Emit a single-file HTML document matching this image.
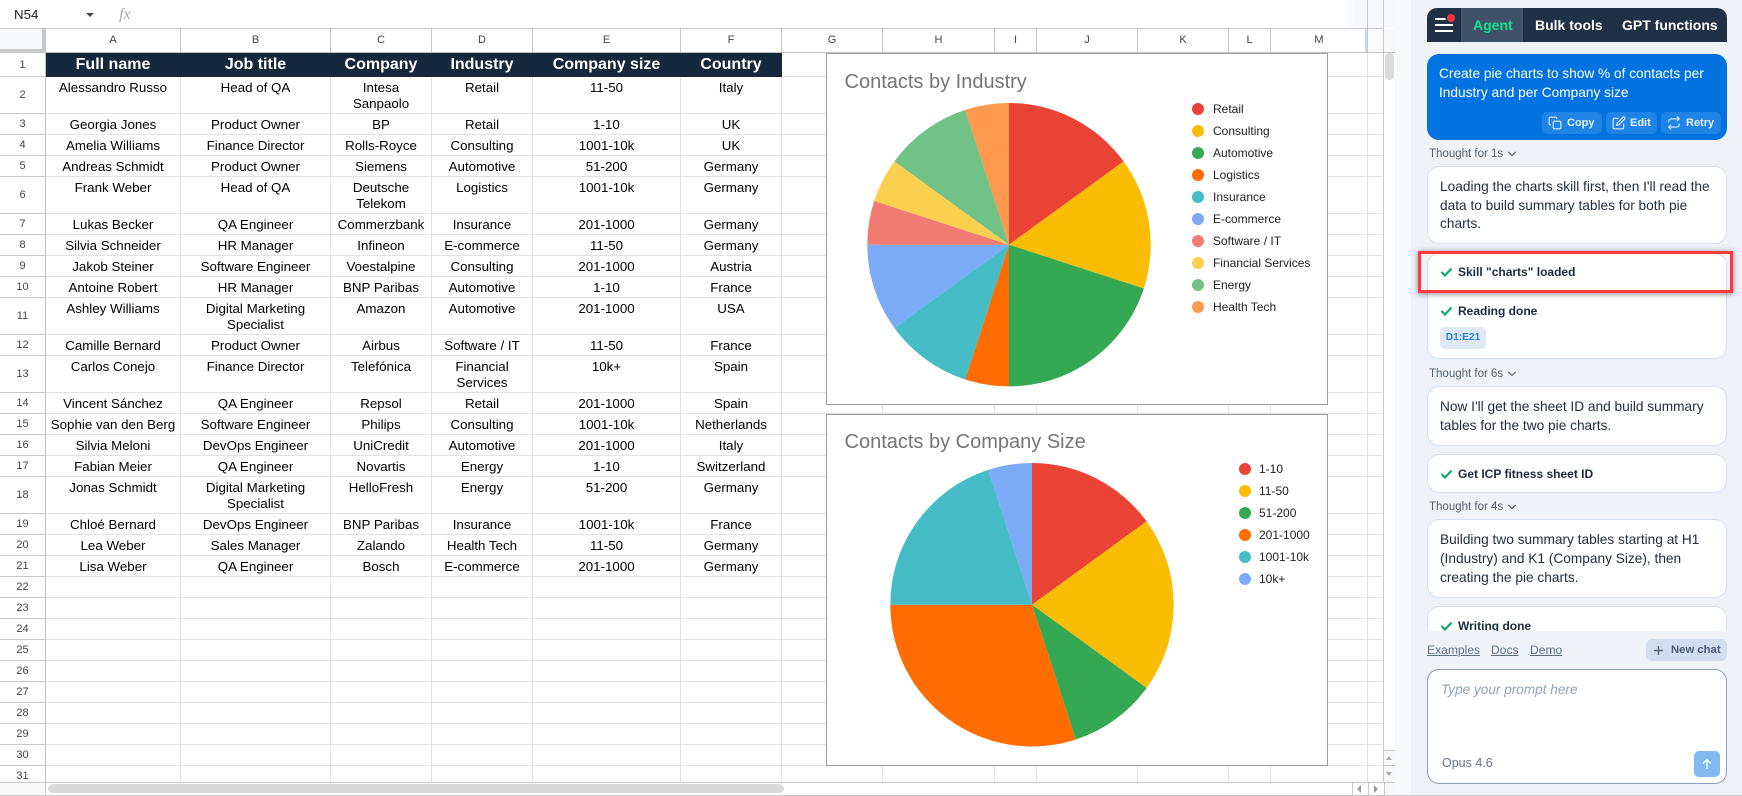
<!DOCTYPE html>
<html><head><meta charset="utf-8"><title>Sheet</title>
<style>
html,body{margin:0;padding:0;width:1742px;height:796px;overflow:hidden;background:#fff;font-family:"Liberation Sans",sans-serif}
*{box-sizing:border-box}
.a{position:absolute}
#grid{position:absolute;left:0;top:53px;width:1384px;height:729px;overflow:hidden}
table{border-collapse:separate;border-spacing:0;table-layout:fixed;width:1384px;font-size:13.33px;color:#000}
td,th{height:21px;padding:3px 2px 0;line-height:16px;text-align:center;vertical-align:top;border-right:1px solid #e2e2e2;border-bottom:1px solid #e2e2e2;overflow:hidden;white-space:nowrap}
th{font-weight:400;font-size:11px;color:#444;border-right:1px solid #c0c0c0;border-bottom:1px solid #c8c8c8;vertical-align:middle;padding:0}
td:last-child{border-right:1px solid #c8c8c8}
tr.t td,tr.t th{height:37px}
tr.h td{height:24px;background:#15283c;color:#fff;font-weight:700;font-size:16px;line-height:22px;padding:0;border-color:#15283c;vertical-align:middle}
tr.h td:last-child{background:#fff;border-right:1px solid #c8c8c8;border-bottom:1px solid #e2e2e2}
.ch{position:absolute;left:0;top:29px;height:24px;display:flex;border-bottom:1px solid #c0c0c0;width:1384px;background:#fff}
.ch span{display:block;height:23px;line-height:23px;text-align:center;font-size:11px;color:#444;border-right:1px solid #c8c8c8}
.v{position:absolute;top:53px;width:1px;height:729px;background:#e2e2e2}
.chart{position:absolute;left:826px;width:502px;height:352px;background:#fff;border:1px solid #9e9e9e}
.tt{position:absolute;left:844.5px;font-size:20px;line-height:24px;color:#757575;white-space:nowrap}
.lg{position:absolute;font-size:12px;line-height:16px;color:#222;white-space:nowrap}
.p{position:absolute;white-space:nowrap;font-size:13.7px;line-height:19px;color:#1f2d3d}
.th{position:absolute;left:1429px;font-size:11.5px;line-height:16px;color:#55606f;white-space:nowrap}
.card{position:absolute;left:1427px;width:300px;background:#fff;border:1px solid #d3e0f2;border-radius:12px}
.b{position:absolute;left:1458px;font-size:12px;line-height:16px;font-weight:700;color:#1b2a3c;white-space:nowrap}
.btn{position:absolute;top:112px;height:22px;background:#1f84e5;border-radius:5px}
.bt{position:absolute;top:115px;font-size:11px;line-height:16px;font-weight:700;color:#e4f0fc;white-space:nowrap}
.lk{position:absolute;top:642px;font-size:12.1px;line-height:16px;color:#5d6f85;text-decoration:underline;white-space:nowrap}
svg{position:absolute;overflow:visible}
</style></head><body>

<!-- formula bar -->
<div class="a" style="left:14px;top:7px;font-size:13.33px;line-height:16px;color:#222">N54</div>
<div class="a" style="left:86px;top:13px;width:0;height:0;border-left:4px solid transparent;border-right:4px solid transparent;border-top:4px solid #444"></div>
<div class="a" style="left:119px;top:6px;font-family:'Liberation Serif',serif;font-style:italic;font-size:16px;line-height:18px;color:#a8a8a8">fx</div>
<div class="a" style="left:1340px;top:0;width:55px;height:28px;background:linear-gradient(90deg,#fff,#f6f8fc 30%)"></div>
<div class="a" style="left:0;top:28px;width:1384px;height:1px;background:#c7c7c7"></div>
<div class="a" style="left:1367px;top:0;width:1px;height:29px;background:#c8c8c8"></div>
<div class="a" style="left:1383px;top:0;width:1px;height:29px;background:#c8c8c8"></div>

<!-- column headers -->
<div class="ch">
<span style="width:46px;background:#f8f9fa;border-right:4px solid #c8c8c8;height:24px;border-bottom:4px solid #c8c8c8"></span>
<span style="width:135px">A</span><span style="width:150px">B</span><span style="width:101px">C</span><span style="width:101px">D</span><span style="width:148px">E</span><span style="width:101px">F</span><span style="width:101px">G</span><span style="width:112px">H</span><span style="width:42px">I</span><span style="width:101px">J</span><span style="width:91px">K</span><span style="width:42px">L</span><span style="width:97px">M</span><span style="width:16px;background:#fbfbfb"></span>
</div>
<div class="a" style="left:1365px;top:29px;width:2px;height:23px;background:#c9d8f2"></div>

<!-- grid -->
<div id="grid">
<table>
<colgroup><col style="width:46px"><col style="width:135px"><col style="width:150px"><col style="width:101px"><col style="width:101px"><col style="width:148px"><col style="width:101px"><col style="width:602px"></colgroup>
<tr class="h"><th style="height:24px">1</th><td>Full name</td><td>Job title</td><td>Company</td><td>Industry</td><td>Company size</td><td>Country</td><td></td></tr>
<tr class="t"><th>2</th><td>Alessandro Russo</td><td>Head of QA</td><td>Intesa<br>Sanpaolo</td><td>Retail</td><td>11-50</td><td>Italy</td><td></td></tr>
<tr><th>3</th><td>Georgia Jones</td><td>Product Owner</td><td>BP</td><td>Retail</td><td>1-10</td><td>UK</td><td></td></tr>
<tr><th>4</th><td>Amelia Williams</td><td>Finance Director</td><td>Rolls-Royce</td><td>Consulting</td><td>1001-10k</td><td>UK</td><td></td></tr>
<tr><th>5</th><td>Andreas Schmidt</td><td>Product Owner</td><td>Siemens</td><td>Automotive</td><td>51-200</td><td>Germany</td><td></td></tr>
<tr class="t"><th>6</th><td>Frank Weber</td><td>Head of QA</td><td>Deutsche<br>Telekom</td><td>Logistics</td><td>1001-10k</td><td>Germany</td><td></td></tr>
<tr><th>7</th><td>Lukas Becker</td><td>QA Engineer</td><td>Commerzbank</td><td>Insurance</td><td>201-1000</td><td>Germany</td><td></td></tr>
<tr><th>8</th><td>Silvia Schneider</td><td>HR Manager</td><td>Infineon</td><td>E-commerce</td><td>11-50</td><td>Germany</td><td></td></tr>
<tr><th>9</th><td>Jakob Steiner</td><td>Software Engineer</td><td>Voestalpine</td><td>Consulting</td><td>201-1000</td><td>Austria</td><td></td></tr>
<tr><th>10</th><td>Antoine Robert</td><td>HR Manager</td><td>BNP Paribas</td><td>Automotive</td><td>1-10</td><td>France</td><td></td></tr>
<tr class="t"><th>11</th><td>Ashley Williams</td><td>Digital Marketing<br>Specialist</td><td>Amazon</td><td>Automotive</td><td>201-1000</td><td>USA</td><td></td></tr>
<tr><th>12</th><td>Camille Bernard</td><td>Product Owner</td><td>Airbus</td><td>Software / IT</td><td>11-50</td><td>France</td><td></td></tr>
<tr class="t"><th>13</th><td>Carlos Conejo</td><td>Finance Director</td><td>Telefónica</td><td>Financial<br>Services</td><td>10k+</td><td>Spain</td><td></td></tr>
<tr><th>14</th><td>Vincent Sánchez</td><td>QA Engineer</td><td>Repsol</td><td>Retail</td><td>201-1000</td><td>Spain</td><td></td></tr>
<tr><th>15</th><td>Sophie van den Berg</td><td>Software Engineer</td><td>Philips</td><td>Consulting</td><td>1001-10k</td><td>Netherlands</td><td></td></tr>
<tr><th>16</th><td>Silvia Meloni</td><td>DevOps Engineer</td><td>UniCredit</td><td>Automotive</td><td>201-1000</td><td>Italy</td><td></td></tr>
<tr><th>17</th><td>Fabian Meier</td><td>QA Engineer</td><td>Novartis</td><td>Energy</td><td>1-10</td><td>Switzerland</td><td></td></tr>
<tr class="t"><th>18</th><td>Jonas Schmidt</td><td>Digital Marketing<br>Specialist</td><td>HelloFresh</td><td>Energy</td><td>51-200</td><td>Germany</td><td></td></tr>
<tr><th>19</th><td>Chloé Bernard</td><td>DevOps Engineer</td><td>BNP Paribas</td><td>Insurance</td><td>1001-10k</td><td>France</td><td></td></tr>
<tr><th>20</th><td>Lea Weber</td><td>Sales Manager</td><td>Zalando</td><td>Health Tech</td><td>11-50</td><td>Germany</td><td></td></tr>
<tr><th>21</th><td>Lisa Weber</td><td>QA Engineer</td><td>Bosch</td><td>E-commerce</td><td>201-1000</td><td>Germany</td><td></td></tr>
<tr><th>22</th><td></td><td></td><td></td><td></td><td></td><td></td><td></td></tr>
<tr><th>23</th><td></td><td></td><td></td><td></td><td></td><td></td><td></td></tr>
<tr><th>24</th><td></td><td></td><td></td><td></td><td></td><td></td><td></td></tr>
<tr><th>25</th><td></td><td></td><td></td><td></td><td></td><td></td><td></td></tr>
<tr><th>26</th><td></td><td></td><td></td><td></td><td></td><td></td><td></td></tr>
<tr><th>27</th><td></td><td></td><td></td><td></td><td></td><td></td><td></td></tr>
<tr><th>28</th><td></td><td></td><td></td><td></td><td></td><td></td><td></td></tr>
<tr><th>29</th><td></td><td></td><td></td><td></td><td></td><td></td><td></td></tr>
<tr><th>30</th><td></td><td></td><td></td><td></td><td></td><td></td><td></td></tr>
<tr><th>31</th><td></td><td></td><td></td><td></td><td></td><td></td><td></td></tr>
</table>
</div>
<div class="v" style="left:882px"></div><div class="v" style="left:994px"></div><div class="v" style="left:1036px"></div><div class="v" style="left:1137px"></div><div class="v" style="left:1228px"></div><div class="v" style="left:1270px"></div><div class="v" style="left:1367px"></div>

<!-- charts -->
<div class="chart" style="top:53px"></div>
<div class="chart" style="top:414px"></div>
<div class="tt" style="top:70px">Contacts by Industry</div>
<div class="tt" style="top:430px">Contacts by Company Size</div>
<svg style="left:0;top:0" width="1742" height="796" fill="none">
<g transform="translate(1009 244.7)">
<path fill="#ea4335" d="M0 0L0 -141.7A141.7 141.7 0 0 1 114.6 -83.3Z"/>
<path fill="#fbbc04" d="M0 0L114.6 -83.3A141.7 141.7 0 0 1 134.8 43.8Z"/>
<path fill="#34a853" d="M0 0L134.8 43.8A141.7 141.7 0 0 1 0 141.7Z"/>
<path fill="#ff6d01" d="M0 0L0 141.7A141.7 141.7 0 0 1 -43.8 134.8Z"/>
<path fill="#46bdc6" d="M0 0L-43.8 134.8A141.7 141.7 0 0 1 -114.6 83.3Z"/>
<path fill="#7baaf7" d="M0 0L-114.6 83.3A141.7 141.7 0 0 1 -141.7 0Z"/>
<path fill="#f07b72" d="M0 0L-141.7 0A141.7 141.7 0 0 1 -134.8 -43.8Z"/>
<path fill="#fcd04f" d="M0 0L-134.8 -43.8A141.7 141.7 0 0 1 -114.6 -83.3Z"/>
<path fill="#71c287" d="M0 0L-114.6 -83.3A141.7 141.7 0 0 1 -43.8 -134.8Z"/>
<path fill="#ff994d" d="M0 0L-43.8 -134.8A141.7 141.7 0 0 1 0 -141.7Z"/>
</g>
<g transform="translate(1032 604.7)">
<path fill="#ea4335" d="M0 0L0 -141.7A141.7 141.7 0 0 1 114.6 -83.3Z"/>
<path fill="#fbbc04" d="M0 0L114.6 -83.3A141.7 141.7 0 0 1 114.6 83.3Z"/>
<path fill="#34a853" d="M0 0L114.6 83.3A141.7 141.7 0 0 1 43.8 134.8Z"/>
<path fill="#ff6d01" d="M0 0L43.8 134.8A141.7 141.7 0 0 1 -141.7 0Z"/>
<path fill="#46bdc6" d="M0 0L-141.7 0A141.7 141.7 0 0 1 -43.8 -134.8Z"/>
<path fill="#7baaf7" d="M0 0L-43.8 -134.8A141.7 141.7 0 0 1 0 -141.7Z"/>
</g>
<circle cx="1198" cy="109" r="6" fill="#ea4335"/><circle cx="1198" cy="131" r="6" fill="#fbbc04"/><circle cx="1198" cy="153" r="6" fill="#34a853"/><circle cx="1198" cy="175" r="6" fill="#ff6d01"/><circle cx="1198" cy="197" r="6" fill="#46bdc6"/><circle cx="1198" cy="219" r="6" fill="#7baaf7"/><circle cx="1198" cy="241" r="6" fill="#f07b72"/><circle cx="1198" cy="263" r="6" fill="#fcd04f"/><circle cx="1198" cy="285" r="6" fill="#71c287"/><circle cx="1198" cy="307" r="6" fill="#ff994d"/>
<circle cx="1245" cy="469" r="6" fill="#ea4335"/><circle cx="1245" cy="491" r="6" fill="#fbbc04"/><circle cx="1245" cy="513" r="6" fill="#34a853"/><circle cx="1245" cy="535" r="6" fill="#ff6d01"/><circle cx="1245" cy="557" r="6" fill="#46bdc6"/><circle cx="1245" cy="579" r="6" fill="#7baaf7"/>
</svg>
<div class="lg" style="left:1213px;top:101px">Retail</div>
<div class="lg" style="left:1213px;top:123px">Consulting</div>
<div class="lg" style="left:1213px;top:145px">Automotive</div>
<div class="lg" style="left:1213px;top:167px">Logistics</div>
<div class="lg" style="left:1213px;top:189px">Insurance</div>
<div class="lg" style="left:1213px;top:211px">E-commerce</div>
<div class="lg" style="left:1213px;top:233px">Software / IT</div>
<div class="lg" style="left:1213px;top:255px">Financial Services</div>
<div class="lg" style="left:1213px;top:277px">Energy</div>
<div class="lg" style="left:1213px;top:299px">Health Tech</div>
<div class="lg" style="left:1259px;top:461px">1-10</div>
<div class="lg" style="left:1259px;top:483px">11-50</div>
<div class="lg" style="left:1259px;top:505px">51-200</div>
<div class="lg" style="left:1259px;top:527px">201-1000</div>
<div class="lg" style="left:1259px;top:549px">1001-10k</div>
<div class="lg" style="left:1259px;top:571px">10k+</div>

<!-- scrollbars -->
<div class="a" style="left:1384px;top:29px;width:11px;height:24px;background:#f8f8f8;border-bottom:1px solid #c0c0c0"></div>
<div class="a" style="left:1384px;top:53px;width:11px;height:729px;background:#fff"></div>
<div class="a" style="left:1385px;top:53px;width:9px;height:27px;background:#dadada;border-radius:5px"></div>
<div class="a" style="left:1384px;top:750px;width:11px;height:16px;background:#f8f8f8;border-top:1px solid #c8c8c8;border-bottom:1px solid #c8c8c8"></div>
<div class="a" style="left:1384px;top:766px;width:11px;height:16px;background:#f8f8f8"></div>
<div class="a" style="left:1386px;top:756px;width:0;height:0;border-left:3.5px solid transparent;border-right:3.5px solid transparent;border-bottom:4px solid #aaa"></div>
<div class="a" style="left:1386px;top:772px;width:0;height:0;border-left:3.5px solid transparent;border-right:3.5px solid transparent;border-top:4px solid #aaa"></div>
<div class="a" style="left:1383px;top:53px;width:1px;height:729px;background:#c8c8c8"></div>
<div class="a" style="left:0;top:782px;width:1395px;height:1px;background:#c8c8c8"></div>
<div class="a" style="left:0;top:783px;width:46px;height:12px;background:#f8f8f8;border-right:1px solid #c8c8c8"></div>
<div class="a" style="left:48px;top:784px;width:736px;height:9px;background:#d9d9d9;border-radius:5px"></div>
<div class="a" style="left:1352px;top:783px;width:1px;height:12px;background:#c8c8c8"></div>
<div class="a" style="left:1368px;top:783px;width:1px;height:12px;background:#c8c8c8"></div>
<div class="a" style="left:1384px;top:783px;width:11px;height:12px;background:#f8f8f8;border-left:1px solid #c8c8c8"></div>
<div class="a" style="left:1357px;top:785px;width:0;height:0;border-top:4px solid transparent;border-bottom:4px solid transparent;border-right:4px solid #999"></div>
<div class="a" style="left:1374px;top:785px;width:0;height:0;border-top:4px solid transparent;border-bottom:4px solid transparent;border-left:4px solid #999"></div>

<!-- side panel -->
<div class="a" style="left:1395px;top:0;width:16px;height:795px;background:#f8f9fd"></div>
<div class="a" style="left:1411px;top:0;width:331px;height:795px;background:#eff3f8"></div>

<div class="a" style="left:1427px;top:8px;width:300px;height:34px;background:#203146;border-radius:10px 10px 0 0"></div>
<div class="a" style="left:1461px;top:8px;width:62px;height:34px;background:#3f5268"></div>
<div class="a" style="left:1435px;top:18px;width:18px;height:2px;background:#fff"></div>
<div class="a" style="left:1435px;top:24px;width:18px;height:2px;background:#fff"></div>
<div class="a" style="left:1435px;top:30px;width:18px;height:2px;background:#fff"></div>
<div class="a" style="left:1447px;top:14px;width:8px;height:8px;border-radius:50%;background:#f5333f;box-shadow:0 0 0 1.5px #203146"></div>
<div class="a" style="left:1473px;top:17px;font-size:14px;line-height:17px;font-weight:700;color:#14e493">Agent</div>
<div class="a" style="left:1535px;top:17px;font-size:14px;line-height:17px;font-weight:700;color:#fff">Bulk tools</div>
<div class="a" style="left:1622px;top:17px;font-size:14px;line-height:17px;font-weight:700;color:#fff">GPT functions</div>

<div class="a" style="left:1427px;top:54px;width:300px;height:86px;background:#0073e0;border-radius:12px"></div>
<div class="p" style="left:1439px;top:64px;color:#fff">Create pie charts to show % of contacts per</div>
<div class="p" style="left:1439px;top:83px;color:#fff">Industry and per Company size</div>
<div class="btn" style="left:1542px;width:60px"></div>
<div class="btn" style="left:1606px;width:51px"></div>
<div class="btn" style="left:1661px;width:60px"></div>
<svg style="left:1548px;top:116px" width="14" height="14" viewBox="0 0 24 24" fill="none" stroke="#dcebfb" stroke-width="2"><rect x="9" y="9" width="13" height="13" rx="2"/><path d="M5 15H4a2 2 0 0 1-2-2V4a2 2 0 0 1 2-2h9a2 2 0 0 1 2 2v1"/></svg>
<div class="bt" style="left:1567px">Copy</div>
<svg style="left:1612px;top:116px" width="14" height="14" viewBox="0 0 24 24" fill="none" stroke="#dcebfb" stroke-width="2"><path d="M11 4H4a2 2 0 0 0-2 2v14a2 2 0 0 0 2 2h14a2 2 0 0 0 2-2v-7"/><path d="M18.5 2.5a2.121 2.121 0 0 1 3 3L12 15l-4 1 1-4 9.5-9.5z"/></svg>
<div class="bt" style="left:1630px">Edit</div>
<svg style="left:1667px;top:116px" width="14" height="14" viewBox="0 0 24 24" fill="none" stroke="#dcebfb" stroke-width="2"><path d="M17 1l4 4-4 4"/><path d="M3 11V9a4 4 0 0 1 4-4h14"/><path d="M7 23l-4-4 4-4"/><path d="M21 13v2a4 4 0 0 1-4 4H3"/></svg>
<div class="bt" style="left:1686px">Retry</div>

<div class="th" style="top:146px">Thought for 1s</div>
<svg style="left:1507px;top:149px" width="10" height="10" viewBox="0 0 24 24" fill="none" stroke="#55606f" stroke-width="2.6"><path d="M3 7l9 9 9-9"/></svg>
<div class="card" style="top:166px;height:78px"></div>
<div class="p" style="left:1440px;top:177px">Loading the charts skill first, then I'll read the</div>
<div class="p" style="left:1440px;top:196px">data to build summary tables for both pie</div>
<div class="p" style="left:1440px;top:214px">charts.</div>

<div class="card" style="top:253px;height:106px"></div>
<div class="a" style="left:1418px;top:251px;width:315px;height:42px;border:3px solid #fb3b40;box-shadow:0 1px 6px rgba(0,0,0,.45);background:transparent"></div>
<svg style="left:1441px;top:267px" width="11" height="10" viewBox="0 0 22 20" fill="none" stroke="#12a86e" stroke-width="4.4"><path d="M1 10l7 7L21 3"/></svg>
<div class="b" style="top:264px">Skill "charts" loaded</div>
<svg style="left:1441px;top:306px" width="11" height="10" viewBox="0 0 22 20" fill="none" stroke="#12a86e" stroke-width="4.4"><path d="M1 10l7 7L21 3"/></svg>
<div class="b" style="top:303px">Reading done</div>
<div class="a" style="left:1440px;top:327px;width:46px;height:22px;background:#dfe9f4;border-radius:5px;text-align:center;font-size:10.2px;line-height:22px;font-weight:700;color:#2a7fe0">D1:E21</div>

<div class="th" style="top:366px">Thought for 6s</div>
<svg style="left:1507px;top:369px" width="10" height="10" viewBox="0 0 24 24" fill="none" stroke="#55606f" stroke-width="2.6"><path d="M3 7l9 9 9-9"/></svg>
<div class="card" style="top:386px;height:60px"></div>
<div class="p" style="left:1440px;top:397px">Now I'll get the sheet ID and build summary</div>
<div class="p" style="left:1440px;top:416px">tables for the two pie charts.</div>

<div class="card" style="top:454px;height:39px"></div>
<svg style="left:1441px;top:469px" width="11" height="10" viewBox="0 0 22 20" fill="none" stroke="#12a86e" stroke-width="4.4"><path d="M1 10l7 7L21 3"/></svg>
<div class="b" style="top:466px">Get ICP fitness sheet ID</div>

<div class="th" style="top:499px">Thought for 4s</div>
<svg style="left:1507px;top:502px" width="10" height="10" viewBox="0 0 24 24" fill="none" stroke="#55606f" stroke-width="2.6"><path d="M3 7l9 9 9-9"/></svg>
<div class="card" style="top:519px;height:79px"></div>
<div class="p" style="left:1440px;top:530px">Building two summary tables starting at H1</div>
<div class="p" style="left:1440px;top:549px">(Industry) and K1 (Company Size), then</div>
<div class="p" style="left:1440px;top:568px">creating the pie charts.</div>

<div class="card" style="top:606px;height:60px"></div>
<svg style="left:1441px;top:621px" width="11" height="10" viewBox="0 0 22 20" fill="none" stroke="#12a86e" stroke-width="4.4"><path d="M1 10l7 7L21 3"/></svg>
<div class="b" style="top:618px">Writing done</div>

<div class="a" style="left:1411px;top:631px;width:331px;height:164px;background:#eff3f8"></div>
<div class="lk" style="left:1427px">Examples</div>
<div class="lk" style="left:1491px">Docs</div>
<div class="lk" style="left:1530px">Demo</div>
<div class="a" style="left:1646px;top:639px;width:81px;height:22px;background:#d1deef;border-radius:6px"></div>
<svg style="left:1653px;top:645px" width="11" height="11" viewBox="0 0 22 22" fill="none" stroke="#54647a" stroke-width="2.8"><path d="M11 2v18M2 11h18"/></svg>
<div class="a" style="left:1671px;top:642px;font-size:11.3px;line-height:16px;font-weight:700;color:#4a5a72">New chat</div>
<div class="a" style="left:1427px;top:669px;width:300px;height:115px;background:#fff;border:1px solid #8ba0ba;border-radius:12px"></div>
<div class="a" style="left:1441px;top:682px;font-size:13.6px;line-height:16px;font-style:italic;color:#93a3b8;white-space:nowrap">Type your prompt here</div>
<div class="a" style="left:1442px;top:755px;font-size:12.5px;line-height:16px;color:#64748b">Opus 4.6</div>
<div class="a" style="left:1694px;top:751px;width:26px;height:26px;background:#7fb9f0;border-radius:5px"></div>
<svg style="left:1701px;top:758px" width="12" height="12" viewBox="0 0 24 24" fill="none" stroke="#fff" stroke-width="2.6"><path d="M12 22V3M4 11l8-8 8 8"/></svg>
<div class="a" style="left:0;top:795px;width:1742px;height:1px;background:#c8c8c8"></div>
</body></html>
